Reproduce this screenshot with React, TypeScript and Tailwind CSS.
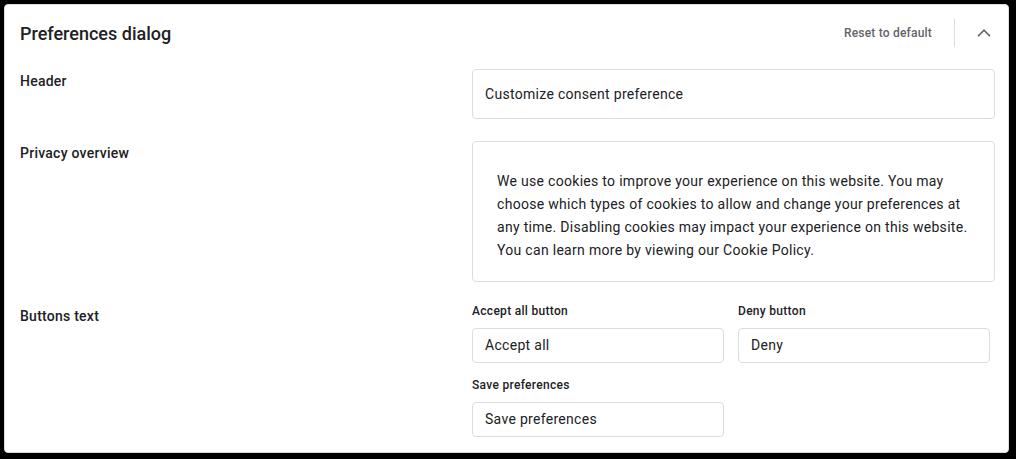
const FONT = "font-['Roboto','Liberation_Sans',sans-serif]";
const LABEL = "text-[14px] leading-[20px] font-medium tracking-[0.25px] text-[#202124]";
const SUB = "text-[12px] leading-[16px] font-medium tracking-[0.3px] text-[#202124]";
const INPUT =
  "flex items-center border border-[#dadce0] rounded-[4px] px-[12px] text-[14px] tracking-[0.3px] text-[#202124] bg-white";

const OVERVIEW = [
  "We use cookies to improve your experience on this website. You may",
  "choose which types of cookies to allow and change your preferences at",
  "any time. Disabling cookies may impact your experience on this website.",
  "You can learn more by viewing our Cookie Policy.",
];

function Field({ label, value }: { label: string; value: string }) {
  return (
    <div className="flex flex-col">
      <div className={SUB}>{label}</div>
      <div className={`${INPUT} mt-[9px] h-[35px]`}>{value}</div>
    </div>
  );
}

export default function App() {
  return (
    <div className={`${FONT} w-[1016px] h-[459px] bg-black pl-[4px] pt-[4px] pr-[7px] pb-[6px]`}>
      <div className="h-full bg-white border border-[#dcdcdc] rounded-[4px] overflow-hidden flex flex-col">
        {/* header */}
        <div className="h-[56px] flex items-center pl-[15px] pr-[4px]">
          <div className="flex-1 text-[18px] font-medium text-[#202124]">Preferences dialog</div>
          <button className="text-[12px] font-medium tracking-[0.2px] text-[#5f6368]">Reset to default</button>
          <div className="ml-[22px] w-px h-[28px] bg-[#dadce0]" />
          <button className="ml-[9px] w-[40px] h-[40px] flex items-center justify-center">
            <svg width="14" height="8" viewBox="0 0 14 8" fill="none">
              <polyline points="1,7.2 7,1.2 13,7.2" stroke="#5f6368" strokeWidth="1.6" />
            </svg>
          </button>
        </div>

        <div className="mt-[8px] flex flex-col gap-[22px] pl-[15px] pr-[13px]">
          <div className="flex">
            <div className={`${LABEL} w-[452px] mt-[2px]`}>Header</div>
            <div className={`${INPUT} flex-1 h-[50px]`}>Customize consent preference</div>
          </div>

          <div className="flex">
            <div className={`${LABEL} w-[452px] mt-[2px]`}>Privacy overview</div>
            <div className="flex-1 h-[141px] border border-[#dadce0] rounded-[4px] pt-[28px] pl-[24px] text-[14px] leading-[23px] tracking-[0.3px] text-[#202124] whitespace-nowrap">
              {OVERVIEW.map((l) => (
                <div key={l}>{l}</div>
              ))}
            </div>
          </div>

          <div className="flex">
            <div className={`${LABEL} w-[452px] mt-[2px]`}>Buttons text</div>
            <div className="grid grid-cols-[252px_252px] gap-x-[14px] gap-y-[14px] -mt-[1px]">
              <Field label="Accept all button" value="Accept all" />
              <Field label="Deny button" value="Deny" />
              <Field label="Save preferences" value="Save preferences" />
            </div>
          </div>
        </div>
      </div>
    </div>
  );
}
